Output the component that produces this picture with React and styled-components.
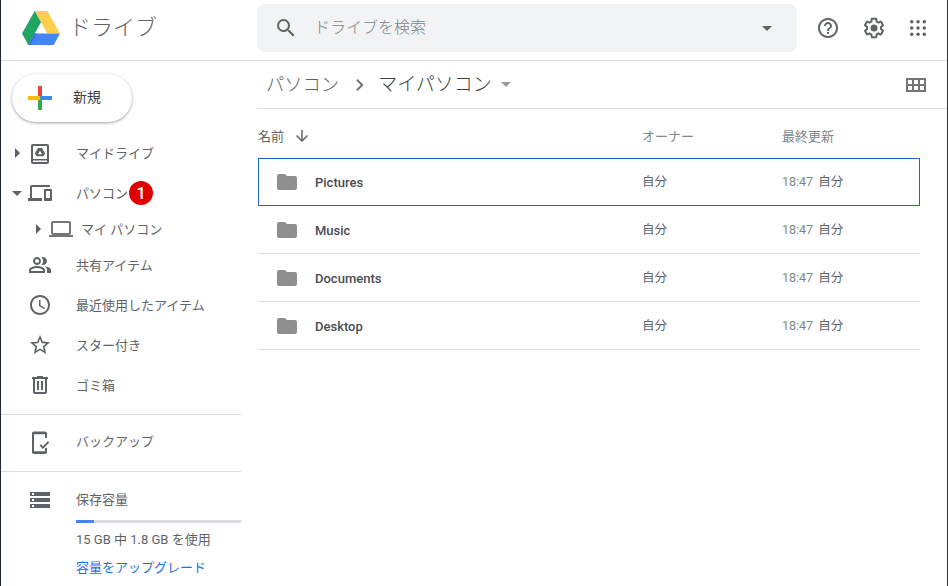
import styled, { createGlobalStyle } from "styled-components";

const GlobalStyle = createGlobalStyle`
  html, body {
    margin: 0;
    padding: 0;
    background: #fff;
  }
  body {
    font-family: "Roboto", "Noto Sans CJK JP", sans-serif;
    color: #5f6368;
  }
`;

const Page = styled.div`
  width: 948px;
  height: 586px;
  box-sizing: border-box;
  border-left: 1px solid #1c2733;
  border-right: 1px solid #333;
  background: #fff;
  overflow: hidden;
  display: flex;
  flex-direction: column;
`;

const Header = styled.header`
  height: 61px;
  flex: none;
  box-sizing: border-box;
  display: flex;
  align-items: flex-start;
  border-bottom: 1px solid #dadce0;
  padding-top: 4px;
`;

const Brand = styled.div`
  width: 256px;
  flex: none;
  height: 48px;
  display: flex;
  align-items: center;
  padding-left: 21px;
  gap: 9px;
  box-sizing: border-box;
`;

const BrandName = styled.span`
  font-size: 22px;
  color: #5f6368;
  font-weight: 300;
  margin-bottom: 6px;
`;

const SearchBox = styled.div`
  width: 540px;
  height: 48px;
  flex: none;
  background: #f1f3f4;
  border-radius: 8px;
  display: flex;
  align-items: center;
  padding: 0 25px 0 17px;
  box-sizing: border-box;
`;

const SearchText = styled.span`
  flex: 1;
  font-size: 16px;
  color: #80868b;
  font-weight: 300;
  margin: 0 0 4px 16px;
`;

const HeaderIcons = styled.div`
  display: flex;
  align-items: center;
  height: 48px;
  margin-left: 19px;
  gap: 22px;
`;

const AppsSlot = styled.span`
  display: flex;
  margin-left: -2px;
`;

const Body = styled.div`
  flex: 1;
  display: flex;
  min-height: 0;
`;

const Sidebar = styled.nav`
  width: 240px;
  flex: none;
  display: flex;
  flex-direction: column;
`;

const NewButton = styled.div`
  width: 120px;
  height: 48px;
  margin: 13px 0 0 11px;
  flex: none;
  border-radius: 24px;
  background: #fff;
  box-shadow: 0 1px 2px 0 rgba(60, 64, 67, 0.3), 0 1px 3px 1px rgba(60, 64, 67, 0.15);
  display: flex;
  align-items: center;
  padding-left: 16px;
  box-sizing: border-box;
  gap: 21px;
  font-size: 14px;
  color: #3c4043;
`;

const NewLabel = styled.span`
  margin-bottom: 4px;
`;

const NavList = styled.div`
  margin-top: ${(p) => p.$top || 0}px;
  display: flex;
  flex-direction: column;
`;

const NavRow = styled.div`
  height: ${(p) => p.$height || 40}px;
  display: flex;
  align-items: center;
  padding-left: ${(p) => p.$indent || 27}px;
  font-size: 13px;
  color: #5f6368;
`;

const Caret = styled.span`
  width: 12px;
  margin-right: 5px;
  flex: none;
  display: flex;
  justify-content: center;
`;

const NavIcon = styled.span`
  width: 24px;
  height: 24px;
  flex: none;
  display: flex;
  align-items: center;
  justify-content: center;
`;

const NavLabel = styled.span`
  margin-left: ${(p) => p.$gap || 24}px;
  margin-bottom: ${(p) => p.$lift || 2}px;
  white-space: nowrap;
`;

const Badge = styled.span`
  width: 24px;
  height: 24px;
  margin-left: 1px;
  margin-bottom: 1px;
  border-radius: 50%;
  background: #e00000;
  color: #fff;
  font-family: "Roboto", sans-serif;
  font-size: 17px;
  font-weight: 500;
  line-height: 24px;
  text-align: center;
  flex: none;
`;

const Divider = styled.div`
  height: 1px;
  width: 240px;
  background: #dadce0;
  flex: none;
  margin-top: 9px;
`;

const StorageRow = styled.div`
  display: flex;
  padding: 16px 0 0 27px;
`;

const StorageBody = styled.div`
  margin-left: 24px;
  flex: 1;
  font-size: 13px;
`;

const StorageTitle = styled.div`
  color: #5f6368;
  line-height: 24px;
`;

const StorageBar = styled.div`
  height: 3px;
  background: #dadce0;
  margin-top: 8px;
`;

const StorageFill = styled.div`
  height: 3px;
  background: #4285f4;
`;

const StorageText = styled.div`
  margin-top: 7px;
  line-height: 20px;
  color: #5f6368;
`;

const UpgradeLink = styled.a`
  display: block;
  margin-top: 8px;
  line-height: 20px;
  color: #1a73e8;
  font-size: 13px;
`;

const Main = styled.main`
  flex: 1;
  min-width: 0;
  display: flex;
  flex-direction: column;
  padding: 0 27px 0 17px;
`;

const PathBar = styled.div`
  height: 48px;
  flex: none;
  box-sizing: border-box;
  display: flex;
  align-items: center;
  border-bottom: 1px solid #dadce0;
  margin: 0 -27px 0 -1px;
  padding: 0 19px 0 9px;
  font-size: 18.3px;
  font-weight: 300;
  color: #5f6368;
`;

const PathPart = styled.span`
  margin-bottom: 4px;
`;

const PathCurrent = styled.span`
  color: #3c4043;
  font-size: 19px;
  margin-bottom: 4px;
`;

const PathChevron = styled.span`
  display: flex;
  margin: 0 7px 0 8px;
`;

const PathCaret = styled.span`
  display: flex;
  margin-left: 9px;
`;

const PathSpacer = styled.span`
  flex: 1;
`;

const TableGrid = styled.div`
  display: grid;
  align-items: center;
  box-sizing: border-box;
`;

const TableHead = styled(TableGrid)`
  height: 49px;
  padding-top: 4px;
  grid-template-columns: 384px 140px 1fr;
  font-size: 13px;
  color: #80868b;
`;

const NameHead = styled.span`
  display: flex;
  align-items: center;
  gap: 9px;
  color: #5f6368;
`;

const FileRow = styled(TableGrid)`
  height: 48px;
  grid-template-columns: 383px 140px 1fr;
  border: 1px solid ${(p) => (p.$selected ? "#1a67d2" : "transparent")};
  border-bottom-color: ${(p) => (p.$selected ? "#1a67d2" : "#dadce0")};
  font-size: 12.5px;
  color: #5f6368;
`;

const FileName = styled.span`
  display: flex;
  align-items: center;
  gap: 16px;
  padding-left: 16px;
  color: #4a4d51;
  font-weight: 500;
  font-size: 13px;
`;

const Owner = styled.span`
  margin-bottom: 4px;
`;

const Modified = styled.span`
  display: flex;
  align-items: center;
  gap: 5px;
`;

const Time = styled.span`
  color: #80868b;
  margin-bottom: 2px;
`;

function Svg({ size = 24, fill = "#5f6368", children, view = "0 0 24 24" }) {
  return (
    <svg width={size} height={size} viewBox={view} fill={fill}>
      {children}
    </svg>
  );
}

const DriveLogo = () => (
  <svg width="38" height="34" viewBox="0 0 38 34">
    <path d="M12.7 0h12.6L38 22.6H25.4z" fill="#ffcf4b" />
    <path d="M12.7 0L0 22.6 6.3 33.9 19 11.2z" fill="#1fa463" />
    <path d="M6.3 33.9h25.4L38 22.6H12.6z" fill="#4285f4" />
    <path d="M6.3 33.9L12.6 22.6H15L8 33.9z" fill="#3367d6" opacity="0.8" />
  </svg>
);

const PlusLogo = () => (
  <svg width="24" height="24" viewBox="0 0 24 24">
    <rect x="10" y="0" width="4" height="12" fill="#ea4335" />
    <rect x="12" y="10" width="12" height="4" fill="#4285f4" />
    <rect x="10" y="12" width="4" height="12" fill="#34a853" />
    <rect x="0" y="10" width="12" height="4" fill="#fbbc05" />
  </svg>
);

const SearchIcon = () => (
  <Svg>
    <path d="M15.5 14h-.79l-.28-.27A6.47 6.47 0 0 0 16 9.5 6.5 6.5 0 1 0 9.5 16c1.61 0 3.09-.59 4.23-1.57l.27.28v.79l5 4.99L20.49 19l-4.99-5zm-6 0C7.01 14 5 11.99 5 9.5S7.01 5 9.5 5 14 7.01 14 9.5 11.99 14 9.5 14z" />
  </Svg>
);

const DownCaret = ({ fill = "#5f6368", width = 10 }) => (
  <svg width={width} height={width / 2} viewBox="0 0 12 6" fill={fill}>
    <path d="M0 0h12L6 6z" />
  </svg>
);

const RightCaret = () => (
  <svg width="5" height="10" viewBox="0 0 6 12" fill="#5f6368">
    <path d="M0 0v12l6-6z" />
  </svg>
);

const HelpIcon = () => (
  <Svg>
    <path d="M11 18h2v-2h-2v2zm1-16C6.48 2 2 6.48 2 12s4.48 10 10 10 10-4.48 10-10S17.52 2 12 2zm0 18c-4.41 0-8-3.59-8-8s3.59-8 8-8 8 3.59 8 8-3.59 8-8 8zm0-14c-2.21 0-4 1.79-4 4h2c0-1.1.9-2 2-2s2 .9 2 2c0 2-3 1.75-3 5h2c0-2.25 3-2.5 3-5 0-2.21-1.79-4-4-4z" />
  </Svg>
);

const GearIcon = () => (
  <Svg>
    <path d="M13.85 22.25h-3.7c-.74 0-1.36-.54-1.45-1.27l-.27-1.89c-.27-.14-.53-.29-.79-.46l-1.8.72c-.7.26-1.47-.03-1.81-.65L2.2 15.53c-.35-.66-.2-1.44.36-1.88l1.53-1.19c-.01-.15-.02-.3-.02-.46 0-.15.01-.31.02-.46l-1.52-1.19c-.59-.45-.74-1.26-.37-1.88l1.85-3.19c.34-.62 1.11-.9 1.79-.63l1.81.73c.26-.17.52-.32.78-.46l.27-1.91c.09-.7.71-1.25 1.44-1.25h3.7c.74 0 1.36.54 1.45 1.27l.27 1.89c.27.14.53.29.79.46l1.8-.72c.71-.26 1.48.03 1.82.65l1.84 3.18c.36.66.2 1.44-.36 1.88l-1.52 1.19c.01.15.02.3.02.46s-.01.31-.02.46l1.52 1.19c.56.45.72 1.23.37 1.86l-1.86 3.22c-.34.62-1.11.9-1.8.63l-1.8-.72c-.26.17-.52.32-.78.46l-.27 1.91c-.1.68-.72 1.22-1.46 1.22zm-3.23-2h2.76l.37-2.55.53-.22c.44-.18.88-.44 1.34-.78l.45-.34 2.38.96 1.38-2.4-2.03-1.58.07-.56c.03-.26.06-.51.06-.78s-.03-.53-.06-.78l-.07-.56 2.03-1.58-1.39-2.4-2.39.96-.45-.35c-.42-.32-.87-.58-1.33-.77l-.52-.22-.37-2.55h-2.76l-.37 2.55-.53.21c-.44.19-.88.44-1.34.79l-.45.33-2.38-.95-1.39 2.39 2.03 1.58-.07.56a7 7 0 0 0-.06.79c0 .26.02.53.06.78l.07.56-2.03 1.58 1.38 2.4 2.39-.96.45.35c.43.33.86.58 1.33.77l.53.22.38 2.55z" />
    <circle cx="12" cy="12" r="3.5" />
  </Svg>
);

const AppsIcon = () => (
  <Svg>
    {[5.7, 12, 18.3].map((y) =>
      [5.7, 12, 18.3].map((x) => <circle key={`${x}-${y}`} cx={x} cy={y} r="1.75" />)
    )}
  </Svg>
);

const MyDriveIcon = () => (
  <Svg>
    <path d="M19 3H5c-1.1 0-2 .9-2 2v16c0 1.1.9 2 2 2h14c1.1 0 2-.9 2-2V5c0-1.1-.9-2-2-2zM5 5h14v13H5V5zm0 16v-1.5h14V21H5z" />
    <path d="M10 7h4l3.2 5.4-1.8 2.9H8.6l-1.8-2.9z M12 9.7l-2 3.5h4z" fillRule="evenodd" />
  </Svg>
);

const ComputersIcon = () => (
  <Svg>
    <path d="M4 6h18V4H4c-1.1 0-2 .9-2 2v11H0v3h14v-3H4V6zm19 2h-6c-.55 0-1 .45-1 1v10c0 .55.45 1 1 1h6c.55 0 1-.45 1-1V9c0-.55-.45-1-1-1zm-1 9h-4v-7h4v7z" />
  </Svg>
);

const LaptopIcon = () => (
  <svg width="24" height="24" viewBox="0 0 24 24" fill="#757575">
    <path d="M20 18c1.1 0 2-.9 2-2V6c0-1.1-.9-2-2-2H4c-1.1 0-2 .9-2 2v10c0 1.1.9 2 2 2H0v2h24v-2h-4zM4 6h16v10H4V6z" />
  </svg>
);

const SharedIcon = () => (
  <Svg>
    <path d="M16.67 13.13C18.04 14.06 19 15.32 19 17v3h4v-3c0-2.18-3.57-3.47-6.33-3.87z" />
    <path d="M15 12c2.21 0 4-1.79 4-4s-1.79-4-4-4c-.47 0-.91.1-1.33.24a5.98 5.98 0 0 1 0 7.52c.42.14.86.24 1.33.24z" />
    <path d="M9 12c2.21 0 4-1.79 4-4s-1.79-4-4-4-4 1.79-4 4 1.79 4 4 4zm0-6c1.1 0 2 .9 2 2s-.9 2-2 2-2-.9-2-2 .9-2 2-2z" />
    <path d="M9 13c-2.67 0-8 1.34-8 4v3h16v-3c0-2.66-5.33-4-8-4zm6 5H3v-.99C3.2 16.29 6.3 15 9 15s5.8 1.29 6 2v1z" />
  </Svg>
);

const ClockIcon = () => (
  <Svg>
    <path d="M11.99 2C6.47 2 2 6.48 2 12s4.47 10 9.99 10C17.52 22 22 17.52 22 12S17.52 2 11.99 2zM12 20c-4.42 0-8-3.58-8-8s3.58-8 8-8 8 3.58 8 8-3.58 8-8 8zm.5-13H11v6l5.25 3.15.75-1.23-4.5-2.67z" />
  </Svg>
);

const StarIcon = () => (
  <Svg>
    <path d="M22 9.24l-7.19-.62L12 2 9.19 8.63 2 9.24l5.46 4.73L5.82 21 12 17.27 18.18 21l-1.63-7.03L22 9.24zM12 15.4l-3.76 2.27 1-4.28-3.32-2.88 4.38-.38L12 6.1l1.71 4.04 4.38.38-3.32 2.88 1 4.28L12 15.4z" />
  </Svg>
);

const TrashIcon = () => (
  <Svg>
    <path d="M15 4V3H9v1H4v2h1v13c0 1.1.9 2 2 2h10c1.1 0 2-.9 2-2V6h1V4h-5zm2 15H7V6h10v13z" />
    <path d="M9 8h2v9H9zm4 0h2v9h-2z" />
  </Svg>
);

const BackupIcon = () => (
  <Svg>
    <path d="M6 1.5h11c1.1 0 2 .9 2 2V8h-2V4.3H6v16.9h11V18h2v4c0 1.1-.9 2-2 2H6c-1.1 0-2-.9-2-2V3.5c0-1.1.9-2 2-2z" />
    <path d="M11.5 15.6l1.4-1.4 2 2 5-5 1.4 1.4-6.4 6.4z" />
  </Svg>
);

const StorageIcon = () => (
  <Svg>
    <path d="M2 20h20v-4H2v4zm2-3h2v2H4v-2zM2 4v4h20V4H2zm4 3H4V5h2v2zm-4 7h20v-4H2v4zm2-3h2v2H4v-2z" />
  </Svg>
);

const FolderIcon = () => (
  <Svg fill="#8f8f8f">
    <path d="M10 4H4c-1.1 0-2 .9-2 2v12c0 1.1.9 2 2 2h16c1.1 0 2-.9 2-2V8c0-1.1-.9-2-2-2h-8l-2-2z" />
  </Svg>
);

const ChevronIcon = () => (
  <svg width="24" height="24" viewBox="0 0 24 24" fill="#757575">
    <path d="M10.6 6 9.2 7.4 13.8 12l-4.6 4.6L10.6 18l6-6z" />
  </svg>
);

const ArrowDownIcon = () => (
  <svg width="18" height="18" viewBox="0 0 24 24" fill="#5f6368">
    <path d="M20 12l-1.41-1.41L13 16.17V4h-2v12.17l-5.58-5.59L4 12l8 8 8-8z" />
  </svg>
);

const GridIcon = () => (
  <svg width="24" height="24" viewBox="0 0 24 24" fill="#757575" fillRule="evenodd">
    <path d="M2 5h20v14H2z M4 7v4h4V7z M10 7v4h4V7z M16 7v4h4V7z M4 13v4h4v-4z M10 13v4h4v-4z M16 13v4h4v-4z" />
  </svg>
);

const navBottom = [
  { key: "shared", label: "共有アイテム", icon: <SharedIcon /> },
  { key: "recent", label: "最近使用したアイテム", icon: <ClockIcon /> },
  { key: "star", label: "スター付き", icon: <StarIcon /> },
  { key: "trash", label: "ゴミ箱", icon: <TrashIcon /> },
];

const files = ["Pictures", "Music", "Documents", "Desktop"];

export default function App() {
  return (
    <Page>
      <GlobalStyle />
      <Header>
        <Brand>
          <DriveLogo />
          <BrandName>ドライブ</BrandName>
        </Brand>
        <SearchBox>
          <SearchIcon />
          <SearchText>ドライブを検索</SearchText>
          <DownCaret />
        </SearchBox>
        <HeaderIcons>
          <HelpIcon />
          <GearIcon />
          <AppsSlot>
            <AppsIcon />
          </AppsSlot>
        </HeaderIcons>
      </Header>
      <Body>
        <Sidebar>
          <NewButton>
            <PlusLogo />
            <NewLabel>新規</NewLabel>
          </NewButton>
          <NavList $top={11}>
            <NavRow $indent={10}>
              <Caret>
                <RightCaret />
              </Caret>
              <NavIcon>
                <MyDriveIcon />
              </NavIcon>
              <NavLabel>マイドライブ</NavLabel>
            </NavRow>
            <NavRow $indent={10}>
              <Caret>
                <DownCaret />
              </Caret>
              <NavIcon>
                <ComputersIcon />
              </NavIcon>
              <NavLabel>パソコン</NavLabel>
              <Badge>1</Badge>
            </NavRow>
            <NavRow $indent={31} $height={32}>
              <Caret>
                <RightCaret />
              </Caret>
              <NavIcon>
                <LaptopIcon />
              </NavIcon>
              <NavLabel $gap={8}>マイ パソコン</NavLabel>
            </NavRow>
            {navBottom.map((item) => (
              <NavRow key={item.key}>
                <NavIcon>{item.icon}</NavIcon>
                <NavLabel>{item.label}</NavLabel>
              </NavRow>
            ))}
          </NavList>
          <Divider />
          <NavList $top={7}>
            <NavRow>
              <NavIcon>
                <BackupIcon />
              </NavIcon>
              <NavLabel $lift={4}>バックアップ</NavLabel>
            </NavRow>
          </NavList>
          <Divider />
          <StorageRow>
            <NavIcon>
              <StorageIcon />
            </NavIcon>
            <StorageBody>
              <StorageTitle>保存容量</StorageTitle>
              <StorageBar>
                <StorageFill style={{ width: `${(1.8 / 15) * 92}%` }} />
              </StorageBar>
              <StorageText>15 GB 中 1.8 GB を使用</StorageText>
              <UpgradeLink>容量をアップグレード</UpgradeLink>
            </StorageBody>
          </StorageRow>
        </Sidebar>
        <Main>
          <PathBar>
            <PathPart>パソコン</PathPart>
            <PathChevron>
              <ChevronIcon />
            </PathChevron>
            <PathCurrent>マイパソコン</PathCurrent>
            <PathCaret>
              <DownCaret fill="#9a9a9a" />
            </PathCaret>
            <PathSpacer />
            <GridIcon />
          </PathBar>
          <TableHead>
            <NameHead>
              名前
              <ArrowDownIcon />
            </NameHead>
            <span>オーナー</span>
            <span>最終更新</span>
          </TableHead>
          {files.map((name, i) => (
            <FileRow key={name} $selected={i === 0}>
              <FileName>
                <FolderIcon />
                {name}
              </FileName>
              <Owner>自分</Owner>
              <Modified>
                <Time>18:47</Time>
                <Owner>自分</Owner>
              </Modified>
            </FileRow>
          ))}
        </Main>
      </Body>
    </Page>
  );
}
